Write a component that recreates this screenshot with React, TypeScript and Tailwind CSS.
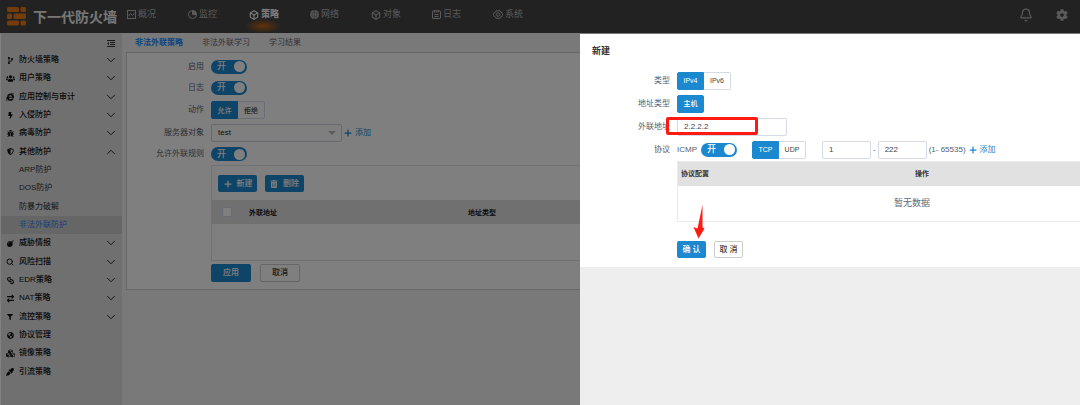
import type { ReactNode } from "react";
import { ArrowRightLeft, Bell, Box, ChevronDown, ChevronUp, Plus, Search } from "lucide-react";
import {
  FaBolt,
  FaBomb,
  FaBug,
  FaCodeBranch,
  FaCog,
  FaCubes,
  FaEyeDropper,
  FaFilter,
  FaGlobeAmericas,
  FaInternetExplorer,
  FaLink,
  FaShieldAlt,
  FaTrashAlt,
  FaUsers,
} from "react-icons/fa";

const ChartIcon = () => (
  <svg viewBox="0 0 18 18" className="size-[9px]" fill="none" stroke="currentColor" strokeWidth="2">
    <rect x="1" y="1" width="16" height="16" />
    <path d="M3 12l4-5 4 4 4-5" />
  </svg>
);

const PieIcon = () => (
  <svg viewBox="0 0 18 18" className="size-[9px]" fill="none" stroke="currentColor" strokeWidth="2">
    <circle cx="9" cy="9" r="8" />
    <path d="M9 1v8h8a8 8 0 0 0-8-8z" fill="currentColor" />
  </svg>
);

const GridGlobeIcon = () => (
  <svg viewBox="0 0 18 18" className="size-[9px]" fill="none">
    <circle cx="9" cy="9" r="9" fill="currentColor" />
    <path d="M9 0v18M0 6h18M0 12h18M9 0C3 5 3 13 9 18M9 0c6 5 6 13 0 18" stroke="#444" strokeWidth="0.7" />
  </svg>
);

const LogIcon = () => (
  <svg viewBox="0 0 18 18" className="size-[9px]" fill="none" stroke="currentColor" strokeWidth="2">
    <rect x="1" y="2" width="16" height="15" rx="1" />
    <path d="M5 0v5M9 0v5M13 0v5M5 9h8M5 13h8" />
  </svg>
);

const HexGearIcon = () => (
  <svg viewBox="0 0 20 18" className="h-[9px] w-[10px]" fill="none" stroke="currentColor" strokeWidth="2">
    <path d="M6 1.5h8l1 2.5 3 1.500v1L19 9l-1 3.500-3 1.500-1 2.500H6L5 14l-3-1.500L1 9l1-3.500L5 4z" />
    <circle cx="10" cy="9" r="3.500" />
  </svg>
);

const DedentIcon = () => (
  <svg viewBox="0 0 16 14" className="h-[7px] w-2" fill="none" stroke="currentColor" strokeWidth="2">
    <path d="M0 1h16M6 5h10M6 9h10M0 13h16" />
    <path d="M4 4v6L0 7z" fill="currentColor" stroke="none" />
  </svg>
);

const Logo = () => (
  <svg viewBox="0 0 19 19" className="size-[19px]" fill="#e67817">
    <rect x="0" y="0" width="12" height="5" rx="1.500" />
    <rect x="13.500" y="0" width="5.500" height="5" rx="1.500" />
    <rect x="0" y="6.500" width="5" height="5.500" rx="1.500" />
    <rect x="6.500" y="6.500" width="12.500" height="5.500" rx="1.500" />
    <rect x="0" y="13.500" width="12" height="5" rx="1.500" />
    <rect x="13.500" y="13.500" width="5.500" height="5" rx="1.500" />
  </svg>
);

const navItems = [
  { label: "概况", icon: <ChartIcon /> },
  { label: "监控", icon: <PieIcon /> },
  { label: "策略", icon: <Box size={10} strokeWidth={2.5} />, active: true },
  { label: "网络", icon: <GridGlobeIcon /> },
  { label: "对象", icon: <Box size={10} strokeWidth={2.5} /> },
  { label: "日志", icon: <LogIcon /> },
  { label: "系统", icon: <HexGearIcon /> },
];

type MenuItem = { label: string; icon?: ReactNode; arrow?: "down" | "up"; active?: boolean };

const menu: MenuItem[] = [
  { label: "防火墙策略", icon: <FaCodeBranch size={7} />, arrow: "down" },
  { label: "用户策略", icon: <FaUsers size={9} />, arrow: "down" },
  { label: "应用控制与审计", icon: <FaInternetExplorer />, arrow: "down" },
  { label: "入侵防护", icon: <FaBolt size={7} />, arrow: "down" },
  { label: "病毒防护", icon: <FaBug size={7} />, arrow: "down" },
  { label: "其他防护", icon: <FaShieldAlt size={7} />, arrow: "up" },
  { label: "ARP防护" },
  { label: "DOS防护" },
  { label: "防暴力破解" },
  { label: "非法外联防护", active: true },
  { label: "威胁情报", icon: <FaBomb size={7} />, arrow: "down" },
  { label: "风险扫描", icon: <Search size={8} strokeWidth={3} />, arrow: "down" },
  { label: "EDR策略", icon: <FaLink className="rotate-90" size={7} />, arrow: "down" },
  { label: "NAT策略", icon: <ArrowRightLeft size={9} strokeWidth={3} />, arrow: "down" },
  { label: "流控策略", icon: <FaFilter size={6} />, arrow: "down" },
  { label: "协议管理", icon: <FaGlobeAmericas size={7} /> },
  { label: "镜像策略", icon: <FaCubes size={9} /> },
  { label: "引流策略", icon: <FaEyeDropper /> },
];

const Header = () => (
  <header className="flex h-[33px] shrink-0 items-center bg-[#444] pl-[7px] pr-3 text-[#b4b4b4]">
    <Logo />
    <span className="ml-[7px] w-[94px] whitespace-nowrap text-[14px] font-bold text-[#eee]">下一代防火墙</span>
    <nav className="flex h-full flex-1">
      {navItems.map((item) => (
        <a
          key={item.label}
          href="#"
          className={`relative flex w-[61px] items-center gap-[2px] whitespace-nowrap pb-1 text-[9px] ${
            item.active ? "font-bold text-white" : ""
          }`}
        >
          {item.active && (
            <span className="absolute -left-1 bottom-0 h-[14px] w-9 bg-[radial-gradient(closest-side,#c46314,transparent)]" />
          )}
          <span className="relative">{item.icon}</span>
          <span className="relative">{item.label}</span>
        </a>
      ))}
    </nav>
    <button aria-label="通知" className="mb-1 mr-[23px]">
      <Bell size={14} strokeWidth={2} />
    </button>
    <button aria-label="设置" className="mb-1">
      <FaCog size={12} />
    </button>
  </header>
);

const Sidebar = () => (
  <aside className="flex w-[122px] shrink-0 flex-col border-l border-white bg-[#e0e0e0] pb-6">
    <button aria-label="收起菜单" className="flex h-[18px] items-center justify-end pr-[7px] pt-[2px] text-[#333]">
      <DedentIcon />
    </button>
    <ul className="flex flex-1 flex-col">
      {menu.map((item) => (
        <li key={item.label} className={`flex flex-1 ${item.active ? "bg-[#cdcdcd]" : ""}`}>
          <a
            href="#"
            className={`flex flex-1 items-center pl-1 pr-1 text-[8px] ${
              item.active ? "text-[#3a78f0]" : item.icon ? "font-medium text-[#111]" : "text-[#333]"
            }`}
          >
            <span className="mr-1 flex w-[10px] justify-center">{item.icon}</span>
            <span className="flex-1">{item.label}</span>
            {item.arrow === "down" && <ChevronDown size={14} strokeWidth={1.5} />}
            {item.arrow === "up" && <ChevronUp size={14} strokeWidth={1.5} />}
          </a>
        </li>
      ))}
    </ul>
  </aside>
);

const Switch = ({ id, label }: { id: string; label?: string }) => (
  <label className="relative flex h-[14px] w-9 items-center rounded-full bg-[#1c88cf] px-[6px]">
    <input id={id} type="checkbox" role="switch" aria-label={label} defaultChecked className="absolute inset-0 opacity-0" />
    <span className="text-[9px] font-medium text-white">开</span>
    <span className="ml-auto -mr-1 size-[11px] rounded-full bg-white" />
  </label>
);

const Segmented = ({ options, label }: { options: string[]; label: string }) => (
  <div role="group" aria-label={label} className="flex h-[18px] text-[7px] font-medium">
    {options.map((option, i) => (
      <button
        key={option}
        className={`w-[27px] border first:rounded-l-xs last:rounded-r-xs ${
          i === 0 ? "border-[#1c88cf] bg-[#1c88cf] text-white" : "border-l-0 border-[#d4dbe6] bg-white text-[#444]"
        }`}
      >
        {option}
      </button>
    ))}
  </div>
);

const AddLink = () => (
  <a href="#" className="flex items-center gap-[2px] text-[8px] text-[#1c88cf]">
    <Plus size={10} strokeWidth={3} />
    添加
  </a>
);

const Field = ({ label, htmlFor, className, children }: { label: string; htmlFor?: string; className: string; children: ReactNode }) => (
  <div className={`flex items-center ${className}`}>
    <label htmlFor={htmlFor} className="mr-[7px] shrink-0 text-right text-[8px] text-[#556070]">
      {label}
    </label>
    {children}
  </div>
);

const PolicyPage = () => (
  <main className="min-w-0 flex-1 bg-[#f2f2f2] pl-1">
    <div className="flex h-[19px] items-center gap-[19px] pl-[9px] text-[8px] text-[#667]">
      <a href="#" className="font-bold text-[#1c88ff]">非法外联策略</a>
      <a href="#">非法外联学习</a>
      <a href="#">学习结果</a>
    </div>
    <section className="border border-[#d0d0d0] bg-white pb-1 pt-[3px]">
      <Field label="启用" htmlFor="enable" className="h-[21px] *:first:w-[77px]">
        <Switch id="enable" />
      </Field>
      <Field label="日志" htmlFor="log" className="h-[21px] *:first:w-[77px]">
        <Switch id="log" />
      </Field>
      <Field label="动作" className="h-6 *:first:w-[77px]">
        <Segmented options={["允许", "拒绝"]} label="动作" />
      </Field>
      <Field label="服务器对象" htmlFor="server" className="h-[21px] *:first:w-[77px]">
        <div className="relative mr-[1px] w-[131px]">
          <select id="server" className="block h-[18px] w-full appearance-none rounded-xs border border-[#cdd4df] px-[6px] text-[8px] text-[#222]">
            <option>test</option>
          </select>
          <span className="absolute right-[6px] top-[7px] border-x-4 border-t-4 border-x-transparent border-t-[#b4b9c2]" />
        </div>
        <AddLink />
      </Field>
      <Field label="允许外联规则" htmlFor="rule" className="h-[22px] *:first:w-[77px]">
        <Switch id="rule" />
      </Field>
      <div className="ml-[84px] border border-[#dfe2e8]">
        <div className="flex gap-2 px-[6px] pb-2 pt-[9px] text-[8px] font-medium text-white">
          <button className="flex h-[17px] w-[39px] items-center justify-center gap-1 rounded-xs bg-[#1c88cf]">
            <Plus size={10} strokeWidth={3} />
            新建
          </button>
          <button className="flex h-[17px] w-[39px] items-center justify-center gap-[5px] rounded-xs bg-[#1c88cf]">
            <FaTrashAlt size={8} />
            删除
          </button>
        </div>
        <table className="w-full table-fixed text-left text-[7px] text-[#222]">
          <thead className="h-6 bg-[#e1e1e1]">
            <tr>
              <th className="w-[37px] pl-[10px]">
                <input type="checkbox" aria-label="全选" className="block size-[10px] appearance-none rounded-xs border border-[#d4dbe6] bg-white" />
              </th>
              <th className="w-[219px]">外联地址</th>
              <th>地址类型</th>
            </tr>
          </thead>
          <tbody>
            <tr className="h-9">
              <td colSpan={3} />
            </tr>
          </tbody>
        </table>
      </div>
      <div className="ml-[84px] flex h-6 items-center gap-[9px] text-[8px] font-medium">
        <button className="h-[18px] w-10 rounded-xs bg-[#1c88cf] text-white">应用</button>
        <button className="h-[18px] w-10 rounded-xs border border-[#ccc] text-[#333]">取消</button>
      </div>
    </section>
  </main>
);

const inputClass = "h-[18px] rounded-xs border border-[#d4dbe6] bg-white px-[6px] text-[8px] text-[#444]";

const CreateDrawer = () => (
  <div role="dialog" aria-label="新建" className="absolute bottom-0 left-[580px] right-0 top-[34px] overflow-hidden bg-[#eee]">
    <div className="bg-white pb-[9px]">
      <h2 className="flex h-[35px] items-center pl-3 text-[9px] font-bold text-[#333]">新建</h2>
      <Field label="类型" className="h-[23px] *:first:w-[90px]">
        <Segmented options={["IPv4", "IPv6"]} label="类型" />
      </Field>
      <Field label="地址类型" className="h-[23px] *:first:w-[90px]">
        <Segmented options={["主机"]} label="地址类型" />
      </Field>
      <Field label="外联地址" htmlFor="address" className="h-[23px] *:first:w-[90px]">
        <div className="relative">
          <input id="address" defaultValue="2.2.2.2" className={`${inputClass} block w-[110px]`} />
          <span className="absolute -left-[11px] -top-px h-[18px] w-[92px] rounded-xs border-3 border-[#ff1a12]" />
        </div>
      </Field>
      <Field label="协议" className="h-[23px] *:first:w-[90px]">
        <label htmlFor="icmp" className="mr-1 text-[8px] text-[#556070]">ICMP</label>
        <Switch id="icmp" />
        <div className="ml-[15px] mr-4">
          <Segmented options={["TCP", "UDP"]} label="协议" />
        </div>
        <input aria-label="起始端口" defaultValue="1" className={`${inputClass} w-[49px]`} />
        <span className="mx-[2px] text-[8px] text-[#556070]">-</span>
        <input aria-label="结束端口" defaultValue="222" className={`${inputClass} w-[49px]`} />
        <span className="mx-[2px] whitespace-nowrap text-[8px] text-[#556070]">(1- 65535)</span>
        <AddLink />
      </Field>
      <div className="ml-[97px]">
        <table className="w-full min-w-[470px] table-fixed border border-[#e8eaed] text-left text-[7px] text-[#333]">
          <thead className="h-6 bg-[#e1e1e1]">
            <tr>
              <th className="pl-[3px]">协议配置</th>
              <th className="pl-[3px]">操作</th>
            </tr>
          </thead>
          <tbody>
            <tr className="h-9">
              <td colSpan={2} className="text-center text-[9px] text-[#5a6b7b]">暂无数据</td>
            </tr>
          </tbody>
        </table>
        <div className="relative flex gap-2 pt-[19px] text-[8px] font-medium">
          <svg viewBox="0 0 12 34" className="absolute -top-[17px] left-4 h-[34px] w-3" fill="#ff1a12">
            <path d="M9.500 0L9.500 22.500 11.500 23.500 5.500 33.500 0.500 22 4.500 23.500z" />
          </svg>
          <button className="h-[17px] w-[29px] rounded-xs bg-[#1c88cf] text-white">确 认</button>
          <button className="h-[17px] w-[29px] rounded-xs border border-[#ccc] text-[#444]">取 消</button>
        </div>
      </div>
    </div>
  </div>
);

export default function App() {
  return (
    <div className="relative flex min-h-screen flex-col overflow-hidden font-['Liberation_Sans','Noto_Sans_CJK_SC',sans-serif] leading-none">
      <Header />
      <div className="flex flex-1">
        <Sidebar />
        <PolicyPage />
      </div>
      <div className="absolute inset-0 bg-black/50" />
      <CreateDrawer />
    </div>
  );
}
